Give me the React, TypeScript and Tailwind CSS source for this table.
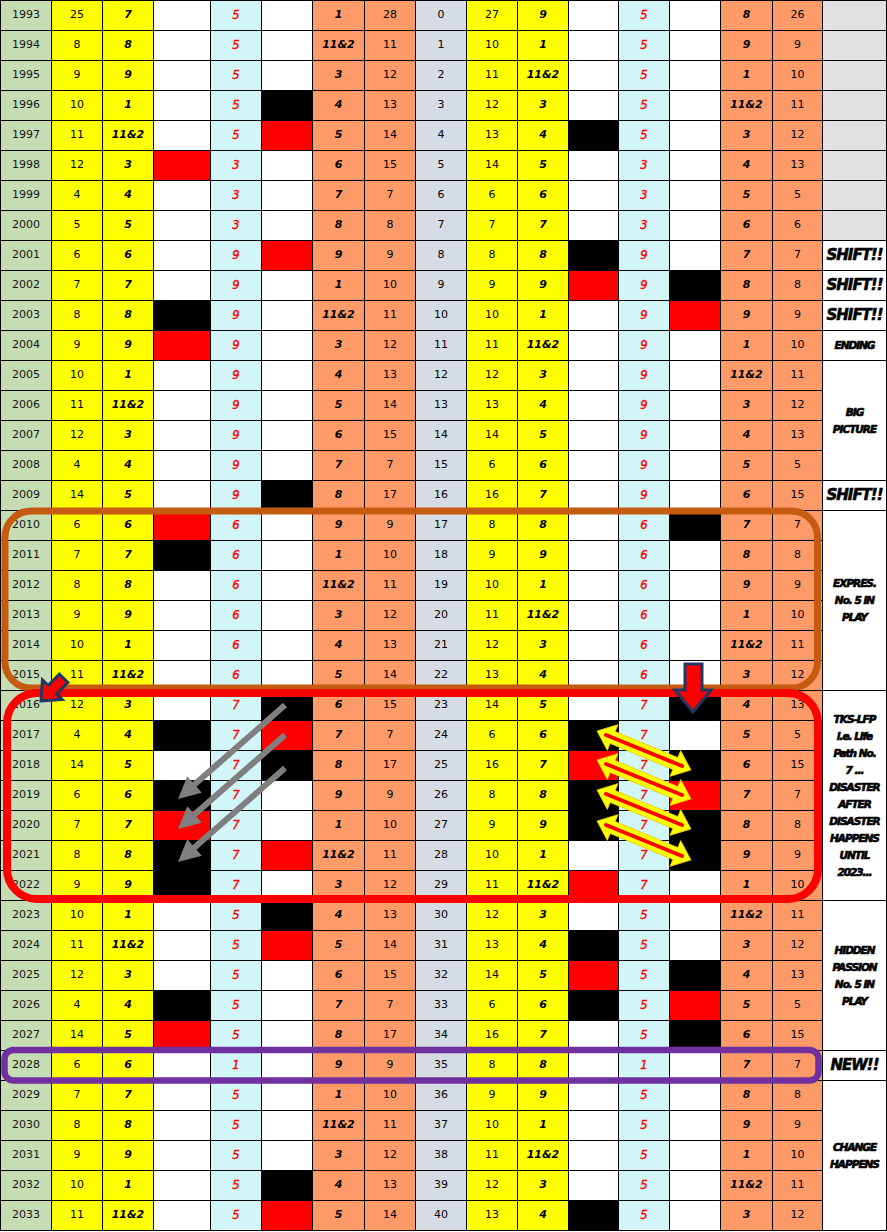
import React from 'react';

// year, c2..c16 ; fills: B = black, R = red, empty = white
const ROWS = [
  '1993,25,7,,5,,1,28,0,27,9,,5,,8,26',
  '1994,8,8,,5,,11&2,11,1,10,1,,5,,9,9',
  '1995,9,9,,5,,3,12,2,11,11&2,,5,,1,10',
  '1996,10,1,,5,B,4,13,3,12,3,,5,,11&2,11',
  '1997,11,11&2,,5,R,5,14,4,13,4,B,5,,3,12',
  '1998,12,3,R,3,,6,15,5,14,5,,3,,4,13',
  '1999,4,4,,3,,7,7,6,6,6,,3,,5,5',
  '2000,5,5,,3,,8,8,7,7,7,,3,,6,6',
  '2001,6,6,,9,R,9,9,8,8,8,B,9,,7,7',
  '2002,7,7,,9,,1,10,9,9,9,R,9,B,8,8',
  '2003,8,8,B,9,,11&2,11,10,10,1,,9,R,9,9',
  '2004,9,9,R,9,,3,12,11,11,11&2,,9,,1,10',
  '2005,10,1,,9,,4,13,12,12,3,,9,,11&2,11',
  '2006,11,11&2,,9,,5,14,13,13,4,,9,,3,12',
  '2007,12,3,,9,,6,15,14,14,5,,9,,4,13',
  '2008,4,4,,9,,7,7,15,6,6,,9,,5,5',
  '2009,14,5,,9,B,8,17,16,16,7,,9,,6,15',
  '2010,6,6,R,6,,9,9,17,8,8,,6,B,7,7',
  '2011,7,7,B,6,,1,10,18,9,9,,6,,8,8',
  '2012,8,8,,6,,11&2,11,19,10,1,,6,,9,9',
  '2013,9,9,,6,,3,12,20,11,11&2,,6,,1,10',
  '2014,10,1,,6,,4,13,21,12,3,,6,,11&2,11',
  '2015,11,11&2,,6,,5,14,22,13,4,,6,,3,12',
  '2016,12,3,,7,B,6,15,23,14,5,,7,B,4,13',
  '2017,4,4,B,7,R,7,7,24,6,6,B,7,,5,5',
  '2018,14,5,,7,B,8,17,25,16,7,R,7,B,6,15',
  '2019,6,6,B,7,,9,9,26,8,8,B,7,R,7,7',
  '2020,7,7,R,7,,1,10,27,9,9,B,7,B,8,8',
  '2021,8,8,B,7,R,11&2,11,28,10,1,,7,B,9,9',
  '2022,9,9,B,7,,3,12,29,11,11&2,R,7,,1,10',
  '2023,10,1,,5,B,4,13,30,12,3,,5,,11&2,11',
  '2024,11,11&2,,5,R,5,14,31,13,4,B,5,,3,12',
  '2025,12,3,,5,,6,15,32,14,5,R,5,B,4,13',
  '2026,4,4,B,5,,7,7,33,6,6,B,5,R,5,5',
  '2027,14,5,R,5,,8,17,34,16,7,,5,B,6,15',
  '2028,6,6,,1,,9,9,35,8,8,,1,,7,7',
  '2029,7,7,,5,,1,10,36,9,9,,5,,8,8',
  '2030,8,8,,5,,11&2,11,37,10,1,,5,,9,9',
  '2031,9,9,,5,,3,12,38,11,11&2,,5,,1,10',
  '2032,10,1,,5,B,4,13,39,12,3,,5,,11&2,11',
  '2033,11,11&2,,5,R,5,14,40,13,4,B,5,,3,12',
].map((r) => r.split(','));

const COL_CLS = [
  'bg-[#c6dcb3] text-[#151515]',
  'bg-[#ffff00]',
  'bg-[#ffff00] font-bold italic',
  '',
  'bg-[#d2f5f8] text-[#ff0000] italic text-[11.5px] [-webkit-text-stroke:0.35px_#ff0000]',
  '',
  'bg-[#fd9a68] font-bold italic',
  'bg-[#fd9a68]',
  'bg-[#d6dce4]',
  'bg-[#ffff00]',
  'bg-[#ffff00] font-bold italic',
  '',
  'bg-[#d2f5f8] text-[#ff0000] italic text-[11.5px] [-webkit-text-stroke:0.35px_#ff0000]',
  '',
  'bg-[#fd9a68] font-bold italic',
  'bg-[#fd9a68]',
];
const FILL_COLS = [3, 5, 11, 13];
const FILL: Record<string, string> = { '': 'bg-white', B: 'bg-black', R: 'bg-[#ff0000]' };

interface Note {
  span: string;
  lines: string[];
  big?: boolean;
}

const NOTES: Record<string, Note> = {
  '2001': { span: '', lines: ['SHIFT!!'], big: true },
  '2002': { span: '', lines: ['SHIFT!!'], big: true },
  '2003': { span: '', lines: ['SHIFT!!'], big: true },
  '2004': { span: '', lines: ['ENDING'] },
  '2005': { span: 'row-span-4', lines: ['BIG', 'PICTURE'] },
  '2009': { span: '', lines: ['SHIFT!!'], big: true },
  '2010': { span: 'row-span-6', lines: ['EXPRES.', 'No. 5 IN', 'PLAY'] },
  '2016': {
    span: 'row-span-7',
    lines: ['TKS-LFP', 'i.e. Life', 'Path No.', '7 ...', 'DISASTER', 'AFTER', 'DISASTER', 'HAPPENS', 'UNTIL', '2023...'],
  },
  '2023': { span: 'row-span-5', lines: ['HIDDEN', 'PASSION', 'No. 5 IN', 'PLAY'] },
  '2028': { span: '', lines: ['NEW!!'], big: true },
  '2029': { span: 'row-span-5', lines: ['CHANGE', 'HAPPENS'] },
};

const COVERED = new Set([
  '2006', '2007', '2008', '2011', '2012', '2013', '2014', '2015',
  '2017', '2018', '2019', '2020', '2021', '2022',
  '2024', '2025', '2026', '2027', '2030', '2031', '2032', '2033',
]);

function arrow(x1: number, y1: number, x2: number, y2: number, s: number, hl: number, hh: number, both = false) {
  const L = Math.hypot(x2 - x1, y2 - y1);
  const dx = (x2 - x1) / L;
  const dy = (y2 - y1) / L;
  const nx = -dy;
  const ny = dx;
  const p = (bx: number, by: number, along: number, side: number) =>
    `${(bx + dx * along + nx * side).toFixed(1)},${(by + dy * along + ny * side).toFixed(1)}`;
  const pts: string[] = [];
  if (both) {
    pts.push(p(x1, y1, 0, 0), p(x1, y1, hl, hh), p(x1, y1, hl, s));
  } else {
    pts.push(p(x1, y1, 0, s));
  }
  pts.push(p(x2, y2, -hl, s), p(x2, y2, -hl, hh), p(x2, y2, 0, 0), p(x2, y2, -hl, -hh), p(x2, y2, -hl, -s));
  if (both) {
    pts.push(p(x1, y1, hl, -s), p(x1, y1, hl, -hh));
  } else {
    pts.push(p(x1, y1, 0, -s));
  }
  return pts.join(' ');
}

const Overlay: React.FC = () => (
  <svg className="absolute inset-0 pointer-events-none" width="887" height="1232" viewBox="0 0 887 1232">
    <rect x="5" y="511" width="812.5" height="177" rx="26" fill="none" stroke="#c55a11" strokeWidth="7" />
    <rect x="7" y="693" width="811" height="206" rx="30" fill="none" stroke="#ff0000" strokeWidth="8" />
    <rect x="4.5" y="1050" width="814" height="30.5" rx="9" fill="none" stroke="#7030a0" strokeWidth="6.5" />

    {[705, 735, 768].map((y) => (
      <polygon key={y} points={arrow(285, y, 178, y + 94, 3, 22, 11)} fill="#7f7f7f" />
    ))}

    {[731, 760, 790, 821].map((y) => (
      <g key={y}>
        <polygon points={arrow(597, y, 691, y + 39, 6.5, 17, 14, true)} fill="#ffff00" stroke="#e6c800" strokeWidth="0.8" />
        <line x1="606" y1={y + 4} x2="682" y2={y + 35} stroke="#ff0000" strokeWidth="4" strokeLinecap="round" />
      </g>
    ))}

    <polygon
      points="685,664 702,664 702,690 711,690 693,712 675,690 685,690"
      fill="#ff0000"
      stroke="#203864"
      strokeWidth="3"
      strokeLinejoin="miter"
    />
    <polygon
      transform="translate(41,701) rotate(45)"
      points="0,0 14,-16 6,-16 6,-32 -6,-32 -6,-16 -14,-16"
      fill="#ff0000"
      stroke="#203864"
      strokeWidth="3"
    />
  </svg>
);

export default function App() {
  return (
    <div className="relative w-[887px] h-[1232px] bg-white font-['DejaVu_Sans',sans-serif] text-[11px] text-black">
      <div className="grid grid-cols-[50px_50px_50px_56px_50px_50px_51px_50px_50px_50px_50px_49px_50px_50px_51px_49px_63px] auto-rows-[29px] gap-px p-px bg-black w-[887px]">
        {ROWS.map((r) => {
          const year = r[0];
          const note = NOTES[year];
          return (
            <React.Fragment key={year}>
              {r.map((v, i) =>
                FILL_COLS.includes(i) ? (
                  <div key={i} className={FILL[v]} />
                ) : (
                  <div key={i} className={`flex items-center justify-center ${COL_CLS[i]}`}>
                    {v}
                  </div>
                ),
              )}
              {note ? (
                <div
                  className={`flex flex-col items-center justify-center bg-white text-center font-bold italic ${note.span} ${
                    note.big
                      ? 'text-[15px] tracking-[-1px] [-webkit-text-stroke:0.6px_black]'
                      : 'text-[10.5px] leading-[17px] tracking-[-1px] [-webkit-text-stroke:0.7px_black]'
                  }`}
                >
                  {note.lines.map((l, k) => (
                    <span key={k} className="whitespace-nowrap">
                      {l}
                    </span>
                  ))}
                </div>
              ) : COVERED.has(year) ? null : (
                <div className="bg-[#e2e2e2]" />
              )}
            </React.Fragment>
          );
        })}
      </div>
      <Overlay />
    </div>
  );
}
